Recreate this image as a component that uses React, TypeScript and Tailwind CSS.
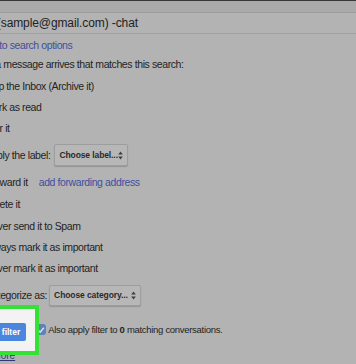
import React from "react";

const rowText = "text-[10.5px] tracking-[-0.4px] leading-none whitespace-nowrap";

function Box() {
  // unchecked checkbox, sits off the left edge like in the screenshot
  return <span className="w-[13px] h-[13px] shrink-0 border border-[#8a8a8a] bg-[#c4c4c4] rounded-[2px]" />;
}

function Option({ label, rowClass, children }: { label: string; rowClass: string; children?: React.ReactNode }) {
  return (
    <div className={`flex items-center gap-[5px] ${rowClass}`}>
      <Box />
      <span className={rowText}>{label}</span>
      {children}
    </div>
  );
}

function Picker({ text, className }: { text: string; className: string }) {
  return (
    <div
      className={`flex items-center justify-between px-[4px] border border-[#9d9d9d] rounded-[2px] bg-[#b7b7b7] shadow-[0_1px_1px_rgba(0,0,0,0.18)] ${className}`}
    >
      <span className="text-[8.5px] font-bold tracking-[-0.1px] text-[#2a2a2a] whitespace-nowrap">{text}</span>
      <svg width="5" height="9" viewBox="0 0 5 9" className="shrink-0">
        <path d="M2.5 0.5 L4.8 3.6 H0.2 Z" fill="#3c3c3c" />
        <path d="M2.5 8.5 L4.8 5.4 H0.2 Z" fill="#3c3c3c" />
      </svg>
    </div>
  );
}

export default function App() {
  return (
    <div className="w-[356px] h-[364px] overflow-hidden bg-[#b3b3b3] text-[#232323] font-['Liberation_Sans',Arial,sans-serif]">
      {/* Header strip + search field */}
      <div className="h-px bg-[#363636]" />
      <div className="h-[12px] bg-[#aaaaaa] border-b border-[#9b9b9b]" />
      <div className="h-[21px] flex items-center border-b border-[#a1a1a1]">
        <span className="ml-[-30px] text-[12px] tracking-[-0.1px] text-[#222] whitespace-nowrap">
          from:(sample@gmail.com) -chat
        </span>
      </div>

      {/* Filter options */}
      <div className="ml-[-33px] flex flex-col">
        <div className="h-[19px] mt-[2px] flex items-center">
          <span className={`${rowText} text-[#3e4fa0]`}>« Back to search options</span>
        </div>
        <div className="h-[18px] flex items-center">
          <span className={rowText}>When a message arrives that matches this search:</span>
        </div>

        <div className="mt-[3px] flex flex-col">
          <Option label="Skip the Inbox (Archive it)" rowClass="h-[21px]" />
          <Option label="Mark as read" rowClass="h-[21px]" />
          <Option label="Star it" rowClass="h-[21px]" />
          <Option label="Apply the label:" rowClass="h-[32px]">
            <Picker text="Choose label..." className="ml-[-1px] w-[74px] h-[22px]" />
          </Option>
          <Option label="Forward it" rowClass="h-[22px]">
            <span className={`${rowText} ml-[6px] text-[#3e4fa0]`}>add forwarding address</span>
          </Option>
          <Option label="Delete it" rowClass="h-[22px]" />
          <Option label="Never send it to Spam" rowClass="h-[22px]" />
          <Option label="Always mark it as important" rowClass="h-[21px]" />
          <Option label="Never mark it as important" rowClass="h-[21px]" />
          <Option label="Categorize as:" rowClass="h-[32px]">
            <Picker text="Choose category..." className="ml-[-3px] w-[92px] h-[21px]" />
          </Option>
        </div>

        {/* Create filter row with highlight */}
        <div className="h-[37px] flex items-center">
          <div className="relative">
            <div className="absolute top-[-13px] bottom-[-13px] left-[-20px] right-[-13px] bg-[#f3f3f3] border-[4px] border-[#33e233]" />
            <button className="relative z-10 h-[18px] px-[6px] rounded-[2px] bg-[#4b86de] text-white text-[8.5px] font-bold whitespace-nowrap">
              Create filter
            </button>
          </div>
          <span className="ml-[9px] w-[11px] h-[11px] shrink-0 rounded-[3px] bg-[#5a82bb] flex items-center justify-center">
            <svg width="8" height="8" viewBox="0 0 8 8">
              <path d="M1.2 4.2 L3.2 6.2 L6.8 1.8" fill="none" stroke="#dfe6f2" strokeWidth="1.4" />
            </svg>
          </span>
          <span className="ml-[2px] text-[9.5px] tracking-[-0.3px] leading-none whitespace-nowrap">
            Also apply filter to <b>0</b> matching conversations.
          </span>
        </div>
        <div className="h-[16px] flex items-center">
          <span className="ml-[-3px] text-[10px] leading-none text-[#2d3a78] underline whitespace-nowrap">Learn more</span>
        </div>
      </div>
    </div>
  );
}
